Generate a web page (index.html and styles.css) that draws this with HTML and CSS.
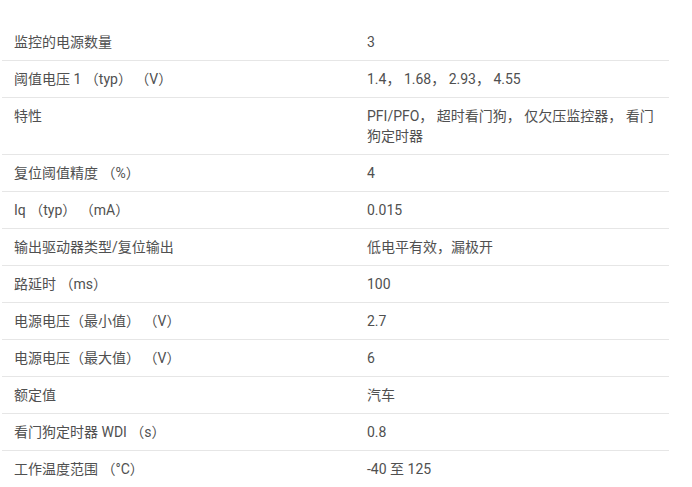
FILE: index.html
```html
<!DOCTYPE html>
<html lang="zh-CN">
<head>
<meta charset="utf-8">
<title>参数</title>
<link rel="stylesheet" href="styles.css">
</head>
<body>
<div class="spec">
  <div class="row"><div class="key">监控的电源数量</div><div class="val">3</div></div>
  <div class="row"><div class="key">阈值电压 1 （typ） （V）</div><div class="val">1.4， 1.68， 2.93， 4.55</div></div>
  <div class="row"><div class="key">特性</div><div class="val">PFI/PFO， 超时看门狗， 仅欠压监控器， 看门狗定时器</div></div>
  <div class="row"><div class="key">复位阈值精度 （%）</div><div class="val">4</div></div>
  <div class="row"><div class="key">Iq （typ） （mA）</div><div class="val">0.015</div></div>
  <div class="row"><div class="key">输出驱动器类型/复位输出</div><div class="val">低电平有效，漏极开</div></div>
  <div class="row"><div class="key">路延时 （ms）</div><div class="val">100</div></div>
  <div class="row"><div class="key">电源电压（最小值） （V）</div><div class="val">2.7</div></div>
  <div class="row"><div class="key">电源电压（最大值） （V）</div><div class="val">6</div></div>
  <div class="row"><div class="key">额定值</div><div class="val">汽车</div></div>
  <div class="row"><div class="key">看门狗定时器 WDI （s）</div><div class="val">0.8</div></div>
  <div class="row"><div class="key">工作温度范围 （°C）</div><div class="val">-40 至 125</div></div>
</div>
</body>
</html>
```
FILE: styles.css
```css
html, body {
  margin: 0;
  padding: 0;
  background: #ffffff;
}
body {
  font-family: Roboto, "Noto Sans CJK SC", sans-serif;
  font-size: 14px;
  line-height: 20px;
  color: #505050;
}
.spec {
  padding: 24px 0 0 2px;
  width: 667px;
}
.row {
  display: grid;
  grid-template-columns: 353px 314px;
  border-bottom: 1px solid #e6e6e6;
}
.key, .val {
  padding: 8px 12px;
}
```
